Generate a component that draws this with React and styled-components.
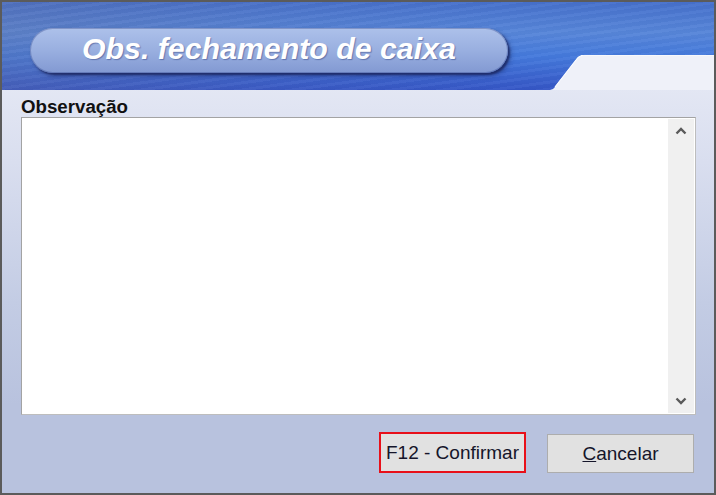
import React from "react";
import styled, { createGlobalStyle } from "styled-components";

const Global = createGlobalStyle`
  html, body { margin: 0; padding: 0; background: #ffffff; }
  * { box-sizing: border-box; }
`;

const Window = styled.div`
  width: 716px;
  height: 495px;
  border: 2px solid #5b5b5b;
  display: flex;
  flex-direction: column;
  background: linear-gradient(180deg, #eff1f9 0px, #d9deef 160px, #c3cce4 300px, #b8c2de 403px);
  font-family: "Liberation Sans", Arial, sans-serif;
  overflow: hidden;
`;

const Header = styled.div`
  position: relative;
  height: 88px;
  flex: none;
  padding: 26px 0 0 28px;
  background:
    repeating-linear-gradient(172deg, rgba(255,255,255,0.035) 0px, rgba(255,255,255,0.035) 3px, rgba(0,0,0,0.02) 3px, rgba(0,0,0,0.02) 7px),
    linear-gradient(90deg, rgba(105,110,150,0.28) 0%, rgba(105,110,150,0.08) 40%, rgba(0,0,0,0) 70%),
    linear-gradient(180deg, #4670cc 0%, #5786d9 35%, #4479dc 62%, #3556c6 100%);
`;

const Notch = styled.svg`
  position: absolute;
  right: 0;
  bottom: 0;
  width: 168px;
  height: 35px;
  display: block;
`;

const TitlePill = styled.div`
  width: 478px;
  height: 45px;
  border-radius: 23px;
  padding-left: 52px;
  display: flex;
  align-items: center;
  background: linear-gradient(180deg, #adc1ea 0%, #99afe0 50%, #8299d2 100%);
  box-shadow: 2px 2px 2px rgba(25, 35, 90, 0.75), 3px 3px 5px rgba(25, 35, 90, 0.4), inset 0 0 0 1px rgba(50, 70, 140, 0.35);
`;

const Title = styled.h1`
  margin: -4px 0 0 0;
  font-family: "Liberation Sans", Arial, sans-serif;
  font-size: 30.3px;
  font-weight: bold;
  font-style: italic;
  color: #ffffff;
  line-height: 34px;
  text-shadow: 1px 1px 1px rgba(40, 55, 120, 0.45);
  white-space: nowrap;
`;

const Body = styled.div`
  flex: 1;
  display: flex;
  flex-direction: column;
  padding: 6px 18px 0 19px;
`;

const Label = styled.div`
  font-size: 18.7px;
  font-weight: bold;
  color: #111111;
  line-height: 21px;
  height: 21px;
`;

const Field = styled.div`
  height: 298px;
  display: flex;
  background: #ffffff;
  border: 1px solid #a3a3a3;
  border-bottom-color: #bdbdbd;
  border-right-color: #bdbdbd;
  padding: 1px;
`;

const TextArea = styled.textarea`
  flex: 1;
  border: none;
  outline: none;
  resize: none;
  background: transparent;
  font-family: "Liberation Sans", Arial, sans-serif;
  font-size: 15px;
  overflow: hidden;
`;

const ScrollBar = styled.div`
  width: 26px;
  flex: none;
  background: #f0f0f0;
  display: flex;
  flex-direction: column;
  justify-content: space-between;
  align-items: center;
  padding: 8px 0 8px 0;
`;

const Arrow = styled.svg`
  width: 12px;
  height: 8px;
  display: block;
`;

const Footer = styled.div`
  display: flex;
  justify-content: flex-end;
  align-items: center;
  gap: 21px;
  padding: 17px 2px 0 0;
`;

const Button = styled.button`
  width: 147px;
  height: ${(p) => (p.$focused ? "41px" : "39px")};
  background: #e1e1e1;
  border: ${(p) => (p.$focused ? "2px solid #e8101a" : "1px solid #adadad")};
  font-family: "Liberation Sans", Arial, sans-serif;
  font-size: 19px;
  color: #15152a;
  padding: 0;
  margin-top: ${(p) => (p.$focused ? "0" : "2px")};
  display: flex;
  align-items: center;
  justify-content: center;
  cursor: pointer;
`;

export default function App() {
  return (
    <>
      <Global />
      <Window>
        <Header>
          <TitlePill>
            <Title>Obs. fechamento de caixa</Title>
          </TitlePill>
          <Notch viewBox="0 0 168 35" preserveAspectRatio="none">
            <path
              d="M0 35 L4 35 Q7 35 9 32 L30 5 Q33 0 40 0 L168 0 L168 35 Z"
              fill="#eff1f9"
            />
            <path
              d="M9 32 L30 5 Q33 0 40 0 L168 0"
              fill="none"
              stroke="#ffffff"
              strokeWidth="1.2"
            />
          </Notch>
        </Header>
        <Body>
          <Label>Observação</Label>
          <Field>
            <TextArea />
            <ScrollBar>
              <Arrow viewBox="0 0 12 8">
                <path d="M1.5 6.5 L6 2 L10.5 6.5" fill="none" stroke="#5a5a5a" strokeWidth="2.4" />
              </Arrow>
              <Arrow viewBox="0 0 12 8">
                <path d="M1.5 1.5 L6 6 L10.5 1.5" fill="none" stroke="#5a5a5a" strokeWidth="2.4" />
              </Arrow>
            </ScrollBar>
          </Field>
          <Footer>
            <Button $focused>F12 - Confirmar</Button>
            <Button>
              <span><u>C</u>ancelar</span>
            </Button>
          </Footer>
        </Body>
      </Window>
    </>
  );
}
